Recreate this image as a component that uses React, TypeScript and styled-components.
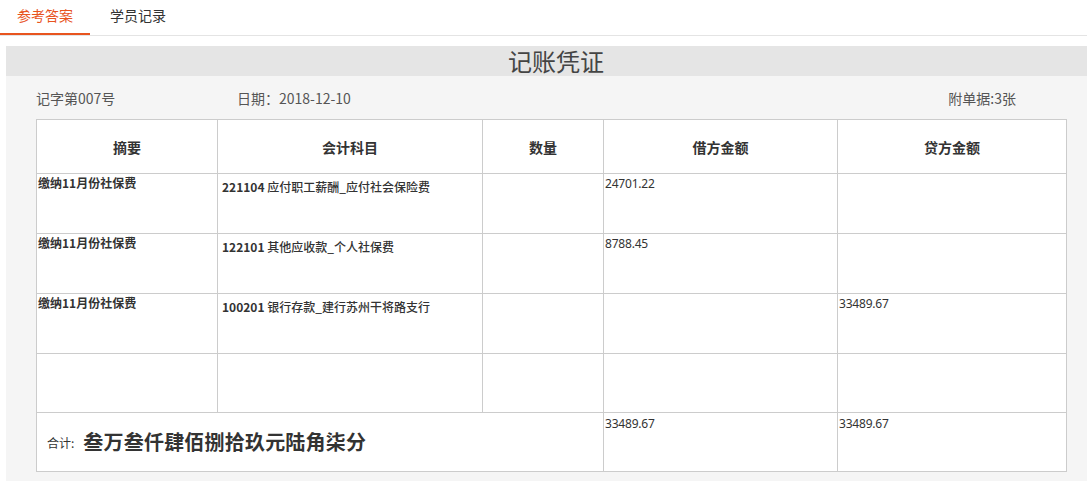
import React from "react";
import styled, { createGlobalStyle } from "styled-components";

const Global = createGlobalStyle`
  html, body { margin: 0; padding: 0; background: #fff; overflow: hidden; }
  body { font-family: "Noto Sans CJK SC", "Noto Sans", sans-serif; color: #333; }
`;

const TabBar = styled.div`
  display: flex;
  height: 35px;
  border-bottom: 1px solid #e4e4e4;
`;

const Tab = styled.div<{ $active?: boolean }>`
  padding: 0 ${(p) => (p.$active ? "17px" : "20px")} 4px;
  display: flex;
  align-items: center;
  font-size: 14px;
  line-height: 20px;
  color: ${(p) => (p.$active ? "#e8541e" : "#333")};
  border-bottom: 2px solid ${(p) => (p.$active ? "#e8541e" : "transparent")};
  margin-bottom: -1px;
  height: 29px;
`;

const Panel = styled.div`
  margin: 10px 0 0 6px;
  width: 1100px;
  background: #f5f5f5;
  padding-bottom: 9px;
`;

const TitleBar = styled.div`
  height: 30px;
  background: #e5e5e5;
  text-align: center;
  font-size: 24px;
  line-height: 30px;
  color: #444;
`;

const InfoRow = styled.div`
  height: 43px;
  display: flex;
  align-items: center;
  padding: 0 0 0 30px;
  width: 1031px;
  font-size: 14px;
  color: #555;
`;

const InfoItem = styled.span<{ $w?: number }>`
  width: ${(p) => (p.$w ? `${p.$w}px` : "auto")};
  line-height: 20px;
`;

const InfoRight = styled.span`
  margin-left: auto;
  margin-right: 51px;
  line-height: 20px;
`;

const Table = styled.table`
  margin-left: 30px;
  width: 1031px;
  border-collapse: collapse;
  background: #fff;
  table-layout: fixed;
`;

const Col = styled.col<{ $w?: number }>`
  width: ${(p) => (p.$w ? `${p.$w}px` : "auto")};
`;

const Row = styled.tr<{ $h: number }>`
  height: ${(p) => p.$h}px;
`;

const Th = styled.th`
  border: 1px solid #cccccc;
  font-size: 14px;
  font-weight: bold;
  color: #333;
  text-align: center;
  vertical-align: middle;
  padding: 0;
  line-height: 20px;
`;

const Td = styled.td<{ $pad?: string }>`
  border: 1px solid #cccccc;
  vertical-align: top;
  padding: ${(p) => p.$pad || "0"};
  font-size: 12px;
  line-height: 18px;
  color: #333;
`;

const Summary = styled.span`
  font-weight: bold;
  color: #333;
`;

const Code = styled.b`
  font-weight: bold;
`;

const Account = styled.span`
  color: #333;
  font-weight: 500;
`;

const Amount = styled.span`
  color: #333;
  font-family: "Noto Sans", "DejaVu Sans", sans-serif;
  letter-spacing: -0.2px;
`;

const TotalCell = styled.td`
  border: 1px solid #cccccc;
  vertical-align: middle;
  padding: 0 0 0 10px;
  white-space: nowrap;
`;

const TotalLabel = styled.span`
  font-size: 12px;
  color: #333;
  margin-right: 9px;
  vertical-align: middle;
`;

const TotalBig = styled.span`
  font-size: 20px;
  font-weight: bold;
  color: #333;
  vertical-align: middle;
  letter-spacing: 0.2px;
`;

const rows = [
  { summary: "缴纳11月份社保费", code: "221104", name: "应付职工薪酬_应付社会保险费", debit: "24701.22", credit: "" },
  { summary: "缴纳11月份社保费", code: "122101", name: "其他应收款_个人社保费", debit: "8788.45", credit: "" },
  { summary: "缴纳11月份社保费", code: "100201", name: "银行存款_建行苏州干将路支行", debit: "", credit: "33489.67" },
  { summary: "", code: "", name: "", debit: "", credit: "" },
];

export default function App() {
  return (
    <>
      <Global />
      <TabBar>
        <Tab $active>参考答案</Tab>
        <Tab>学员记录</Tab>
      </TabBar>
      <Panel>
        <TitleBar>记账凭证</TitleBar>
        <InfoRow>
          <InfoItem $w={201}>记字第007号</InfoItem>
          <InfoItem>日期：2018-12-10</InfoItem>
          <InfoRight>附单据:3张</InfoRight>
        </InfoRow>
        <Table>
          <colgroup>
            <Col $w={181} />
            <Col $w={265} />
            <Col $w={121} />
            <Col $w={234} />
            <Col />
          </colgroup>
          <thead>
            <Row $h={54}>
              <Th>摘要</Th>
              <Th>会计科目</Th>
              <Th>数量</Th>
              <Th>借方金额</Th>
              <Th>贷方金额</Th>
            </Row>
          </thead>
          <tbody>
            {rows.map((r, i) => (
              <Row $h={i === 3 ? 59 : 60} key={i}>
                <Td $pad="0 0 0 1px">
                  <Summary>{r.summary}</Summary>
                </Td>
                <Td $pad="4px 0 0 4px">
                  {r.code && (
                    <Account>
                      <Code>{r.code}</Code> {r.name}
                    </Account>
                  )}
                </Td>
                <Td />
                <Td $pad="0 0 0 1px">
                  <Amount>{r.debit}</Amount>
                </Td>
                <Td $pad="0 0 0 1px">
                  <Amount>{r.credit}</Amount>
                </Td>
              </Row>
            ))}
            <Row $h={59}>
              <TotalCell colSpan={3}>
                <TotalLabel>合计:</TotalLabel>
                <TotalBig>叁万叁仟肆佰捌拾玖元陆角柒分</TotalBig>
              </TotalCell>
              <Td $pad="1px 0 0 1px">
                <Amount>33489.67</Amount>
              </Td>
              <Td $pad="1px 0 0 1px">
                <Amount>33489.67</Amount>
              </Td>
            </Row>
          </tbody>
        </Table>
      </Panel>
    </>
  );
}
